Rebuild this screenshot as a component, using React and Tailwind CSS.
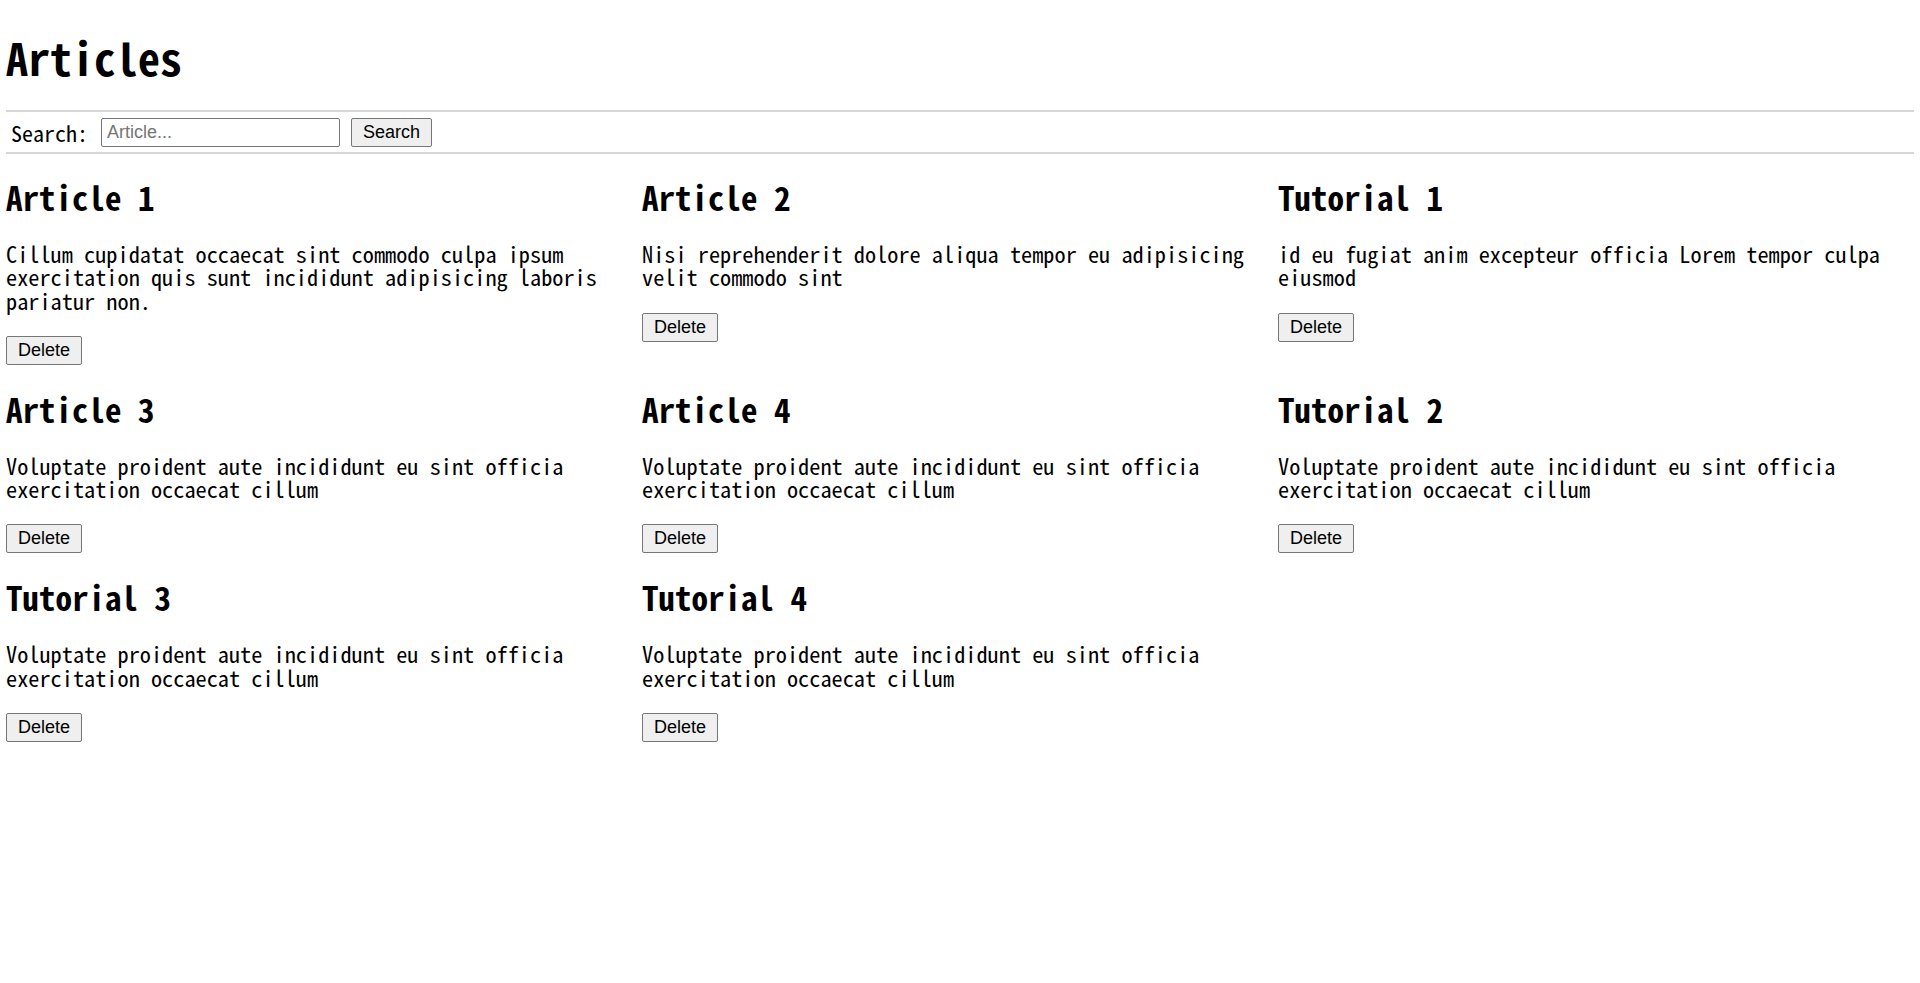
import React from "react";

const mono = { fontFamily: '"Noto Sans Mono CJK JP", "Noto Sans CJK JP", "Liberation Mono", monospace' };

const items = [
  { t: "Article 1", d: "Cillum cupidatat occaecat sint commodo culpa ipsum exercitation quis sunt incididunt adipisicing laboris pariatur non." },
  { t: "Article 2", d: "Nisi reprehenderit dolore aliqua tempor eu adipisicing velit commodo sint" },
  { t: "Tutorial 1", d: "id eu fugiat anim excepteur officia Lorem tempor culpa eiusmod" },
  { t: "Article 3", d: "Voluptate proident aute incididunt eu sint officia exercitation occaecat cillum" },
  { t: "Article 4", d: "Voluptate proident aute incididunt eu sint officia exercitation occaecat cillum" },
  { t: "Tutorial 2", d: "Voluptate proident aute incididunt eu sint officia exercitation occaecat cillum" },
  { t: "Tutorial 3", d: "Voluptate proident aute incididunt eu sint officia exercitation occaecat cillum" },
  { t: "Tutorial 4", d: "Voluptate proident aute incididunt eu sint officia exercitation occaecat cillum" },
];

function Btn({ children, className = "" }) {
  return (
    <button
      className={"bg-[#efefef] border border-[#767676] rounded-[2px] text-[18px] leading-[21px] text-black px-[11px] py-[3px] h-[29px] font-['Liberation_Sans',Arial,sans-serif] " + className}
    >
      {children}
    </button>
  );
}

export default function App() {
  return (
    <div className="bg-white min-h-[983px] px-[6px] text-black" style={mono}>
      <h1 className="text-[44px] font-bold leading-[52px] pt-[31px] pb-[27px]">Articles</h1>
      <div className="border-t-2 border-b-2 border-[#d6d6d6] flex items-center h-[44px] pl-[5px]">
        <span className="text-[22px] leading-[28px] mr-[13px]">Search:</span>
        <input
          placeholder="Article..."
          className="w-[239px] h-[29px] border border-[#767676] rounded-[2px] px-[5px] text-[18px] placeholder:text-[#757575] font-['Liberation_Sans',Arial,sans-serif]"
        />
        <Btn className="ml-[11px]">Search</Btn>
      </div>
      <div className="grid grid-cols-3 pt-[23px]">
        {items.map((it) => (
          <div key={it.t} className="flex flex-col items-start pb-[24px]">
            <h2 className="text-[33px] font-bold leading-[40px]">{it.t}</h2>
            <p className="text-[22.3px] leading-[23.25px] mt-[25px]">{it.d}</p>
            <Btn className="mt-[24px]">Delete</Btn>
          </div>
        ))}
      </div>
    </div>
  );
}
